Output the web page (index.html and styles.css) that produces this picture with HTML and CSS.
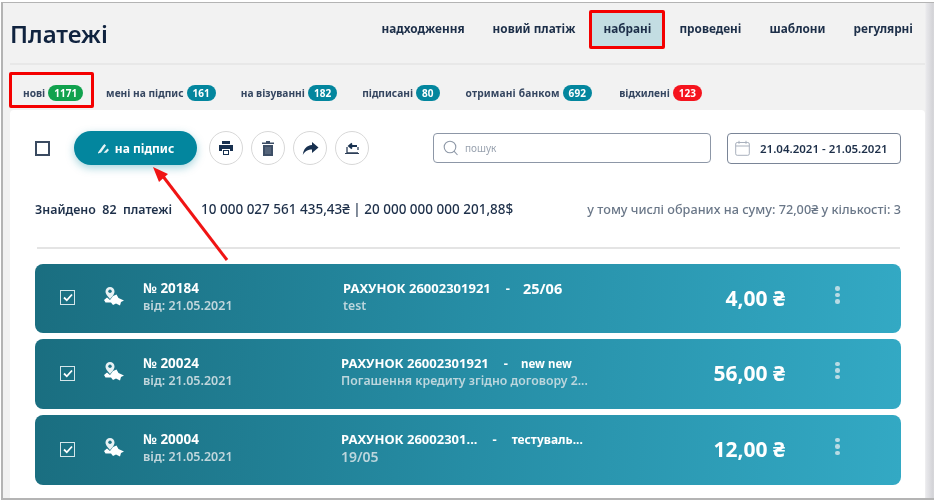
FILE: index.html
```html
<!DOCTYPE html>
<html lang="uk">
<head>
<meta charset="utf-8">
<title>Платежі</title>
<link rel="stylesheet" href="styles.css">
</head>
<body>
<div class="frame">
  <div class="page">
    <header class="head">
      <h1 class="title">Платежі</h1>
      <nav class="nav">
        <a class="nav-item">надходження</a>
        <a class="nav-item">новий платіж</a>
        <a class="nav-item nav-active">набрані</a>
        <a class="nav-item">проведені</a>
        <a class="nav-item">шаблони</a>
        <a class="nav-item">регулярні</a>
      </nav>
    </header>
    <div class="tabs">
      <div class="tab tab-active">нові <span class="badge green">1171</span></div>
      <div class="tab">мені на підпис <span class="badge teal">161</span></div>
      <div class="tab">на візуванні <span class="badge teal">182</span></div>
      <div class="tab">підписані <span class="badge teal">80</span></div>
      <div class="tab tab-wide">отримані банком <span class="badge teal">692</span></div>
      <div class="tab tab-last">відхилені <span class="badge red">123</span></div>
    </div>
    <main class="panel">
      <div class="toolbar">
        <span class="check-main"></span>
        <button class="sign-btn">
          <svg width="13" height="11" viewBox="0 0 13 11"><path d="M1 9.500 6 2.500 7.500 1 9 2.500 4 9.500 1 10.500ZM6.500 9.800 10.500 5.500 12 7 9.500 9.800Z" fill="#e6f3f5"/></svg>
          на підпис
        </button>
        <div class="circles">
          <span class="circle"><svg width="16" height="16" viewBox="0 0 16 16"><path d="M4 1h8v3H4ZM1 5h14v6h-3V9H4v2H1ZM5 10h6v5H5Z" fill="#17304f"/><rect x="6" y="11" width="4" height="3" fill="#fff"/></svg></span>
          <span class="circle"><svg width="14" height="17" viewBox="0 0 14 17"><path d="M1 2.500h4V1h4v1.500h4V4H1ZM2 5h10v11H2Z" fill="#3d4e66"/><path d="M5 7v7M7 7v7M9 7v7" stroke="#7c8899" stroke-width=".8"/></svg></span>
          <span class="circle"><svg width="17" height="15" viewBox="0 0 17 15"><path d="M10 1 16.500 6.500 10 12V8.500C6 8.500 3 10 .8 14 1.500 8 4.500 4.500 10 4Z" fill="#17304f"/></svg></span>
          <span class="circle"><svg width="16" height="13" viewBox="0 0 16 13"><path d="M3 5v6h11M14 8V5" fill="none" stroke="#2d3f58" stroke-width="1.300"/><path d="M5 4h8M8 1.500 5 4l3 2.500" fill="none" stroke="#17304f" stroke-width="1.800"/><path d="M1 11.500h14" stroke="#2d3f58" stroke-width="1"/></svg></span>
        </div>
        <div class="search">
          <svg width="16" height="16" viewBox="0 0 16 16"><circle cx="7" cy="7" r="5.800" fill="none" stroke="#8f99a8" stroke-width="1.100"/><path d="M11 11.200 14.500 15" stroke="#8f99a8" stroke-width="1.100"/></svg>
          <span>пошук</span>
        </div>
        <div class="date">
          <svg width="15" height="16" viewBox="0 0 15 16"><rect x=".7" y="2.500" width="13.600" height="12.800" rx="1.500" fill="none" stroke="#a9b1bd"/><path d="M.7 6h13.600M4 .8v3M11 .8v3" stroke="#a9b1bd"/></svg>
          <span>21.04.2021 - 21.05.2021</span>
        </div>
      </div>
      <div class="summary">
        <span class="found">Знайдено&nbsp; 82&nbsp; платежі</span>
        <span class="sums">10 000 027 561 435,43₴ | 20 000 000 000 201,88$</span>
        <span class="selected">у тому числі обраних на суму: 72,00₴ у кількості: 3</span>
      </div>
      <div class="rule"></div>
      <div class="cards">
        <article class="card first">
          <span class="check"><svg width="10" height="9" viewBox="0 0 10 9"><path d="M1 4.500 3.800 7.300 9 1.500" fill="none" stroke="#fff" stroke-width="1.800"/></svg></span>
          <svg class="pin" width="22" height="21" viewBox="0 0 22 21"><path d="M7 1a4.500 4.500 0 0 1 4.500 4.500c0 1.500-.8 3-1.800 4.500L7 13 4.500 10C3.400 8.500 2.500 7 2.500 5.500A4.500 4.500 0 0 1 7 1Z" fill="#e8f1f3"/><circle cx="7" cy="5.300" r="1.700" fill="#1f7488"/><path d="M1 14 4 11.500 7 14 10 10 13.500 8.500 15.500 12 21 14.500 18 16 17 19.500 13 17.500 10 19 8 16.500 2.500 16.500Z" fill="#fff"/></svg>
          <div class="meta"><b>№ 20184</b><small>від: 21.05.2021</small></div>
          <div class="desc one"><div class="desc-title"><span>РАХУНОК 26002301921</span><i>-</i><span class="large">25/06</span></div><small class="note">test</small></div>
          <div class="amount">4,00 ₴</div>
          <span class="dots"><i></i><i></i><i></i></span>
        </article>
        <article class="card">
          <span class="check"><svg width="10" height="9" viewBox="0 0 10 9"><path d="M1 4.500 3.800 7.300 9 1.500" fill="none" stroke="#fff" stroke-width="1.800"/></svg></span>
          <svg class="pin" width="22" height="21" viewBox="0 0 22 21"><path d="M7 1a4.500 4.500 0 0 1 4.500 4.500c0 1.500-.8 3-1.800 4.500L7 13 4.500 10C3.400 8.500 2.500 7 2.500 5.500A4.500 4.500 0 0 1 7 1Z" fill="#e8f1f3"/><circle cx="7" cy="5.300" r="1.700" fill="#1f7488"/><path d="M1 14 4 11.500 7 14 10 10 13.500 8.500 15.500 12 21 14.500 18 16 17 19.500 13 17.500 10 19 8 16.500 2.500 16.500Z" fill="#fff"/></svg>
          <div class="meta"><b>№ 20024</b><small>від: 21.05.2021</small></div>
          <div class="desc"><div class="desc-title"><span>РАХУНОК 26002301921</span><i>-</i><span class="tiny">new new</span></div><small class="note">Погашення кредиту згідно договору 2...</small></div>
          <div class="amount">56,00 ₴</div>
          <span class="dots"><i></i><i></i><i></i></span>
        </article>
        <article class="card">
          <span class="check"><svg width="10" height="9" viewBox="0 0 10 9"><path d="M1 4.500 3.800 7.300 9 1.500" fill="none" stroke="#fff" stroke-width="1.800"/></svg></span>
          <svg class="pin" width="22" height="21" viewBox="0 0 22 21"><path d="M7 1a4.500 4.500 0 0 1 4.500 4.500c0 1.500-.8 3-1.800 4.500L7 13 4.500 10C3.400 8.500 2.500 7 2.500 5.500A4.500 4.500 0 0 1 7 1Z" fill="#e8f1f3"/><circle cx="7" cy="5.300" r="1.700" fill="#1f7488"/><path d="M1 14 4 11.500 7 14 10 10 13.500 8.500 15.500 12 21 14.500 18 16 17 19.500 13 17.500 10 19 8 16.500 2.500 16.500Z" fill="#fff"/></svg>
          <div class="meta"><b>№ 20004</b><small>від: 21.05.2021</small></div>
          <div class="desc"><div class="desc-title"><span>РАХУНОК 26002301...</span><i>-</i><span class="tiny wide">тестуваль...</span></div><small class="note big">19/05</small></div>
          <div class="amount">12,00 ₴</div>
          <span class="dots"><i></i><i></i><i></i></span>
        </article>
      </div>
    </main>
  </div>
  <svg class="arrow" width="90" height="105" viewBox="0 0 90 105"><path d="M77 98 12 13" stroke="#f01414" stroke-width="3" fill="none"/><path d="M3 5 18 12 9 20Z" fill="#f01414"/></svg>
</div>
</body>
</html>
```
FILE: styles.css
```css
* { box-sizing: border-box; }
html, body { margin: 0; padding: 0; background: #fff; }
body { font-family: "Noto Sans", "Open Sans", sans-serif; color: #1d2f49; }

.frame {
  position: relative;
  width: 936px;
  height: 501px;
  padding: 2px 0 0 1px;
  overflow: hidden;
}
.page {
  width: 933px;
  height: 498px;
  border: solid #b4b4b4;
  border-width: 1px 0 2px 2px;
  background: linear-gradient(90deg, #f2f2f2 0, #f2f2f2 922px, #e9e9ec 923px, #d3d3d7 930px, #e8e8ea 933px);
  filter: blur(.35px);
  padding-left: 7px;
}

.head {
  width: 915px;
  height: 62px;
  display: flex;
  justify-content: space-between;
  border-bottom: 2px solid #e8e8e8;
}
.title {
  margin: 14px 0 0;
  font-size: 24px;
  line-height: 34px;
  font-weight: 600;
  color: #10233f;
}
.nav { display: flex; align-items: flex-start; margin: 7px -2px 0 0; }
.nav-item {
  height: 39px;
  line-height: 36px;
  padding: 0 14px;
  font-size: 11.800px;
  font-weight: 700;
  color: #1d2f49;
  white-space: nowrap;
}
.nav-active {
  background: #c3dde2;
  border: 3px solid #f40000;
  border-radius: 2px;
  line-height: 31px;
  padding: 0 11px;
}

.tabs { display: flex; align-items: center; height: 45px; padding-top: 10px; gap: 25px; }
.tab {
  display: flex;
  align-items: center;
  gap: 3px;
  font-size: 10.200px;
  font-weight: 700;
  color: #354660;
  white-space: nowrap;
}
.tab-active {
  height: 36px;
  padding: 5px 8px 0 11px;
  border: 3px solid #f40000;
  border-radius: 2px;
  margin: 0 -13px 5px -1px;
}
.tab-wide { letter-spacing: .15px; margin-left: 1px; }
.tab-last { margin-left: 2px; }
.badge {
  height: 16px;
  padding: 0 6px;
  border-radius: 8px;
  color: #fff;
  font-size: 10px;
  line-height: 16px;
  text-align: center;
}
.green { background: #11a24e; }
.teal { background: #03869e; }
.red { background: #f5141e; }

.panel {
  width: 915px;
  height: 388px;
  background: #fff;
  border-radius: 4px 4px 0 0;
  padding: 21px 24px 0 25px;
}

.toolbar { display: flex; align-items: center; height: 34px; }
.check-main {
  width: 15px;
  height: 15px;
  border: 2px solid #3a4a60;
  margin-right: 24px;
}
.sign-btn {
  width: 123px;
  height: 34px;
  border: 0;
  border-radius: 17px;
  background: #03869e;
  box-shadow: 0 3px 9px rgba(3, 134, 158, .35);
  color: #fff;
  font: 700 12px "Noto Sans", sans-serif;
  display: flex;
  align-items: center;
  justify-content: center;
  gap: 5px;
  padding: 0;
}
.circles { display: flex; gap: 8px; margin-left: 12px; }
.circle {
  width: 34px;
  height: 34px;
  border: 1px solid #d8d8d8;
  border-radius: 50%;
  display: flex;
  align-items: center;
  justify-content: center;
}
.search {
  width: 278px;
  height: 30px;
  margin-left: 64px;
  border: 1px solid #8d97a7;
  border-radius: 4px;
  display: flex;
  align-items: center;
  gap: 6px;
  padding-left: 9px;
  font-size: 10px;
  color: #9aa3b0;
}
.date {
  width: 174px;
  height: 31px;
  margin-left: 16px;
  border: 1px solid #7a8597;
  border-radius: 4px;
  display: flex;
  align-items: center;
  gap: 10px;
  padding-left: 7px;
  font-size: 11.500px;
  font-weight: 600;
  color: #1d2f49;
}

.summary {
  display: flex;
  align-items: center;
  height: 20px;
  margin-top: 34px;
  font-size: 12px;
  font-weight: 600;
  white-space: nowrap;
}
.found { width: 166px; font-size: 12.400px; }
.sums { font-size: 13.500px; font-weight: 500; }
.selected { margin-left: auto; font-size: 12.700px; font-weight: 500; color: #6a7788; }

.rule { height: 2px; margin: 28px 1px 15px 2px; background: #e4e4e4; }

.cards { display: flex; flex-direction: column; gap: 6px; width: 866px; }
.card {
  height: 70px;
  border-radius: 8px;
  background: linear-gradient(95deg, #1a6e80 0%, #268da5 50%, #33a9c4 100%);
  display: flex;
  align-items: center;
  padding-left: 25px;
  color: #fff;
}
.first { height: 69px; }
.check {
  width: 15px;
  height: 15px;
  border: 1px solid #d5e6ea;
  display: flex;
  align-items: center;
  justify-content: center;
  margin: -2px 28px 0 0;
  flex: none;
}
.pin { flex: none; margin: -5px 18px 0 0; }
.meta { width: 198px; display: flex; flex-direction: column; margin-top: -4px; }
.meta b { font-size: 13.500px; line-height: 17px; }
.meta small { font-size: 12.500px; line-height: 17px; font-weight: 600; color: #c0d6dc; }
.desc { width: 320px; margin: -4px 0 0 0; }
.one { padding-left: 2px; }
.desc-title {
  display: flex;
  align-items: center;
  font-size: 13px;
  line-height: 17px;
  font-weight: 700;
}
.desc-title i { font-style: normal; margin: 0 13px 0 15px; }
.tiny { font-size: 11.500px; }
.wide { font-size: 12px; margin-left: 2px; }
.large { font-size: 14.500px; }
.note { display: block; font-size: 12.300px; line-height: 17px; font-weight: 600; color: #bcd6dd; }
.big { font-size: 14px; }
.amount {
  width: 124px;
  text-align: right;
  font-size: 21px;
  font-weight: 700;
  white-space: nowrap;
  margin-top: -2px;
}
.dots { display: flex; flex-direction: column; gap: 2px; margin: -7px 0 0 50px; }
.dots i { width: 4.500px; height: 4.500px; border-radius: 50%; background: #b8dbe4; }

.arrow { position: absolute; left: 150px; top: 162px; }
```
